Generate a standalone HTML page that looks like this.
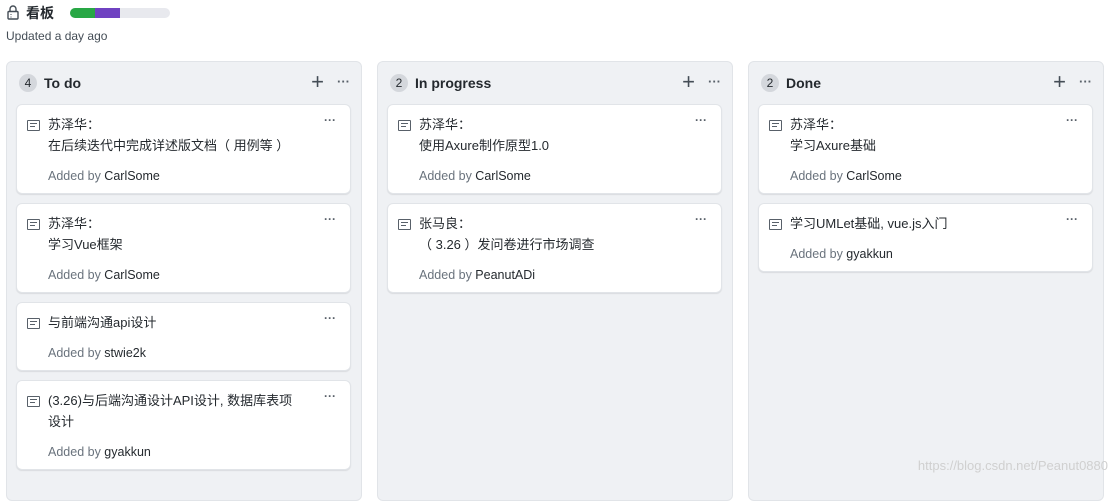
<!DOCTYPE html>
<html><head><meta charset="utf-8"><style>
*{box-sizing:border-box;margin:0;padding:0}
body{width:1114px;height:487px;overflow:hidden;background:#fff;font-family:"Liberation Sans","Noto Sans CJK SC",sans-serif;color:#24292e;position:relative}
.title{position:absolute;left:26px;top:4px;font-size:14px;font-weight:bold;line-height:18px}
.bar{position:absolute;left:70px;top:8px;width:100px;height:10px;border-radius:5px;background:#e8e9ee;overflow:hidden}
.upd{position:absolute;left:6px;top:28px;font-size:12px;color:#444d56;line-height:16px}
.col{position:absolute;top:61px;width:356px;height:440px;background:#eff1f4;border:1px solid #e1e4e8;border-radius:6px}
.hd{position:absolute;left:0;top:0;width:100%;height:42px}
.cnt{position:absolute;left:12px;top:12px;width:18px;height:18px;border-radius:9px;background:#d4d7dc;font-size:12px;text-align:center;line-height:18px;color:#24292e}
.ct{position:absolute;left:37px;top:11px;font-size:14px;font-weight:bold;line-height:20px}
.plus{position:absolute;right:37px;top:8px;font-size:22px;line-height:24px;color:#444d56}
.dots{position:absolute;right:11px;top:12px;font-size:13px;color:#586069;font-weight:bold}
.card{position:absolute;left:9px;width:335px;background:#fff;border:1px solid #e1e4e8;border-radius:6px;box-shadow:0 1px 1px rgba(27,31,35,.1);padding:9px 0 7px 31px;font-size:13px}
.card .l{line-height:21px}
.card .a{margin-top:10px;line-height:20px;color:#6a737d;font-size:12.5px}
.card .a b{font-weight:normal;color:#24292e}
.ic{position:absolute;left:10px;top:15px;width:13px;height:11px;border:1.3px solid #586069;border-radius:1px}
.ic:before{content:"";position:absolute;left:2px;top:2px;width:7px;height:1.3px;background:#586069}
.ic:after{content:"";position:absolute;left:2px;top:5px;width:5px;height:1.3px;background:#586069}
.cd{position:absolute;right:14px;top:8px;font-size:12px;color:#586069;font-weight:bold}
.wm{position:absolute;right:6px;top:458px;font-size:13px;color:#d0d0d0}
</style></head><body>
<svg style="position:absolute;left:7px;top:5px" width="12" height="15" viewBox="0 0 12 15"><rect x="1" y="6.5" width="10" height="7.5" rx="1" fill="none" stroke="#444d56" stroke-width="1.4"/><path d="M3 6.5V4a3 3 0 0 1 6 0v2.5" fill="none" stroke="#444d56" stroke-width="1.4"/><path d="M4 9v1M4 11.5v1" stroke="#444d56"/></svg>
<div class="title">看板</div>
<div class="bar"><div style="position:absolute;left:0;width:25px;height:10px;background:#28a745"></div><div style="position:absolute;left:25px;width:25px;height:10px;background:#6f42c1"></div></div>
<div class="upd">Updated a day ago</div>

<div class="col" style="left:6px">
<div class="hd"><div class="cnt">4</div><div class="ct">To do</div><div class="plus">+</div><div class="dots">···</div></div>
<div class="card" style="top:42px"><i class="ic"></i><span class="cd">···</span><div class="l">苏泽华：</div><div class="l">在后续迭代中完成详述版文档（ 用例等 ）</div><div class="a">Added by <b>CarlSome</b></div></div>
<div class="card" style="top:141px"><i class="ic"></i><span class="cd">···</span><div class="l">苏泽华：</div><div class="l">学习Vue框架</div><div class="a">Added by <b>CarlSome</b></div></div>
<div class="card" style="top:240px"><i class="ic"></i><span class="cd">···</span><div class="l">与前端沟通api设计</div><div class="a">Added by <b>stwie2k</b></div></div>
<div class="card" style="top:318px"><i class="ic"></i><span class="cd">···</span><div class="l">(3.26)与后端沟通设计API设计, 数据库表项</div><div class="l">设计</div><div class="a">Added by <b>gyakkun</b></div></div>
</div>

<div class="col" style="left:377px">
<div class="hd"><div class="cnt">2</div><div class="ct">In progress</div><div class="plus">+</div><div class="dots">···</div></div>
<div class="card" style="top:42px"><i class="ic"></i><span class="cd">···</span><div class="l">苏泽华：</div><div class="l">使用Axure制作原型1.0</div><div class="a">Added by <b>CarlSome</b></div></div>
<div class="card" style="top:141px"><i class="ic"></i><span class="cd">···</span><div class="l">张马良：</div><div class="l">（ 3.26 ）发问卷进行市场调查</div><div class="a">Added by <b>PeanutADi</b></div></div>
</div>

<div class="col" style="left:748px">
<div class="hd"><div class="cnt">2</div><div class="ct">Done</div><div class="plus">+</div><div class="dots">···</div></div>
<div class="card" style="top:42px"><i class="ic"></i><span class="cd">···</span><div class="l">苏泽华：</div><div class="l">学习Axure基础</div><div class="a">Added by <b>CarlSome</b></div></div>
<div class="card" style="top:141px"><i class="ic"></i><span class="cd">···</span><div class="l">学习UMLet基础, vue.js入门</div><div class="a">Added by <b>gyakkun</b></div></div>
</div>
<div class="wm">https://blog.csdn.net/Peanut0880</div>
</body></html>
